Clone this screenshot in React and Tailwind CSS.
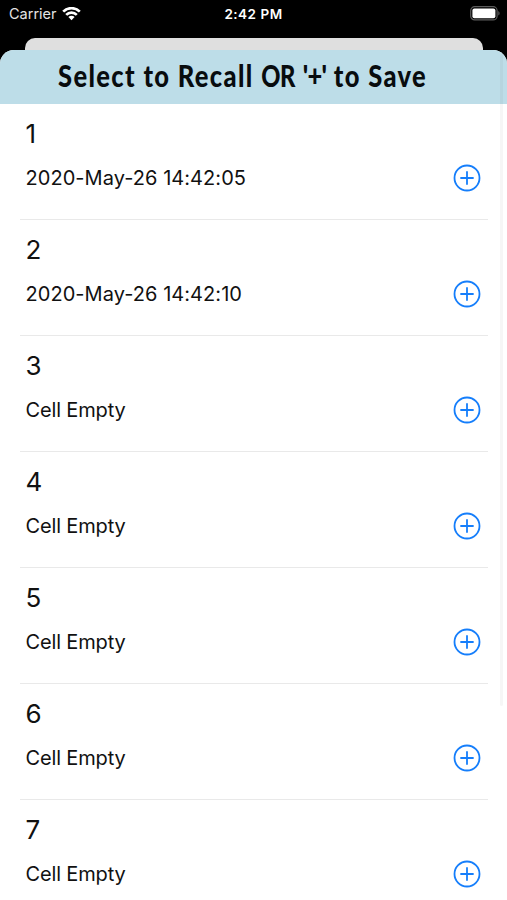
const cells = [
  { id: 1, label: '2020-May-26 14:42:05', saved: true },
  { id: 2, label: '2020-May-26 14:42:10', saved: true },
  { id: 3, label: 'Cell Empty' },
  { id: 4, label: 'Cell Empty' },
  { id: 5, label: 'Cell Empty' },
  { id: 6, label: 'Cell Empty' },
  { id: 7, label: 'Cell Empty' },
];

function WifiIcon() {
  return (
    <svg width="19" height="14" viewBox="0 0 19 14" fill="none" stroke="white" strokeWidth="2.7">
      <path d="M1.2 4.6a11.8 11.8 0 0 1 16.6 0" />
      <path d="M4.2 7.9a7.5 7.5 0 0 1 10.6 0" />
      <path d="M9.5 13.2 6.4 10.1a4.4 4.4 0 0 1 6.2 0Z" fill="white" stroke="none" />
    </svg>
  );
}

function BatteryIcon() {
  return (
    <svg width="31" height="15" viewBox="0 0 31 15" fill="none">
      <rect x="0.7" y="0.7" width="26.4" height="13.2" rx="4" stroke="#5c5c5c" strokeWidth="1.2" />
      <rect x="2.4" y="2.4" width="23" height="9.8" rx="2" fill="white" />
      <path d="M28.3 5v4.6c1.8-.8 1.8-3.8 0-4.6Z" fill="#5c5c5c" />
    </svg>
  );
}

function PlusCircle() {
  return (
    <svg width="28" height="28" viewBox="0 0 28 28" fill="none" stroke="#157efb" strokeWidth="1.8">
      <circle cx="14" cy="14" r="12.5" />
      <path d="M14 8v12M8 14h12" strokeLinecap="round" />
    </svg>
  );
}

function StatusBar() {
  return (
    <div className="grid h-[38px] grid-cols-3 items-start pt-[5px] text-white">
      <div className="flex items-center gap-[5px] pl-[9px]">
        <span className="text-[14.5px] leading-[18px] text-[#e4e4e4]">Carrier</span>
        <WifiIcon />
      </div>
      <span className="text-center text-[13.5px] leading-[18px] font-semibold tracking-[0.5px]">2:42 PM</span>
      <div className="flex justify-end pt-[1px] pr-[6px]">
        <BatteryIcon />
      </div>
    </div>
  );
}

function CellRow({ id, label, saved }) {
  return (
    <li className="mr-[19px] ml-5 h-[116.1px] shrink-0 border-b border-[#e9e9e9] pt-[14px] pr-[7px] pl-[5.5px]">
      <p className="text-[26px] leading-8">{id}</p>
      <div className="mt-[14px] flex h-7 items-center justify-between">
        <span className={`text-[20px] leading-7 ${saved ? 'tracking-[0.05px]' : 'tracking-[-0.15px]'}`}>{label}</span>
        <button aria-label={`Save to cell ${id}`}>
          <PlusCircle />
        </button>
      </div>
    </li>
  );
}

export default function App() {
  return (
    <div className="flex h-[900px] w-[507px] flex-col overflow-hidden bg-black font-['Inter','Liberation_Sans',sans-serif] text-[#111]">
      <StatusBar />
      <div className="mr-[24px] ml-[25px] h-3 shrink-0 rounded-t-[10px] bg-[#dfdfdf]" />
      <div className="relative flex min-h-0 flex-1 flex-col overflow-hidden rounded-t-[14px] bg-white">
        <header className="h-[53.5px] shrink-0 bg-[#bddde8] pl-[58px]">
          <h1 className="font-['Lato',sans-serif] text-[30px] leading-[51px] font-black whitespace-nowrap text-[#080c0e]">
            <span className="inline-block origin-left scale-x-[0.85] tracking-[1.6px]">
              Select to Recall <span className="inline-block origin-left scale-x-[0.93] tracking-[-0.6px]">OR</span>
              <span className="tracking-[-0.8px]"> &apos;+&apos;</span> to Save
            </span>
          </h1>
        </header>
        <ul className="flex min-h-0 flex-1 flex-col overflow-hidden">
          {cells.map((cell) => (
            <CellRow key={cell.id} {...cell} />
          ))}
        </ul>
        {/* scroll indicator */}
        <div className="absolute top-1 right-[4px] h-[652px] w-[3px] rounded-full bg-black/[0.035]" />
      </div>
    </div>
  );
}
